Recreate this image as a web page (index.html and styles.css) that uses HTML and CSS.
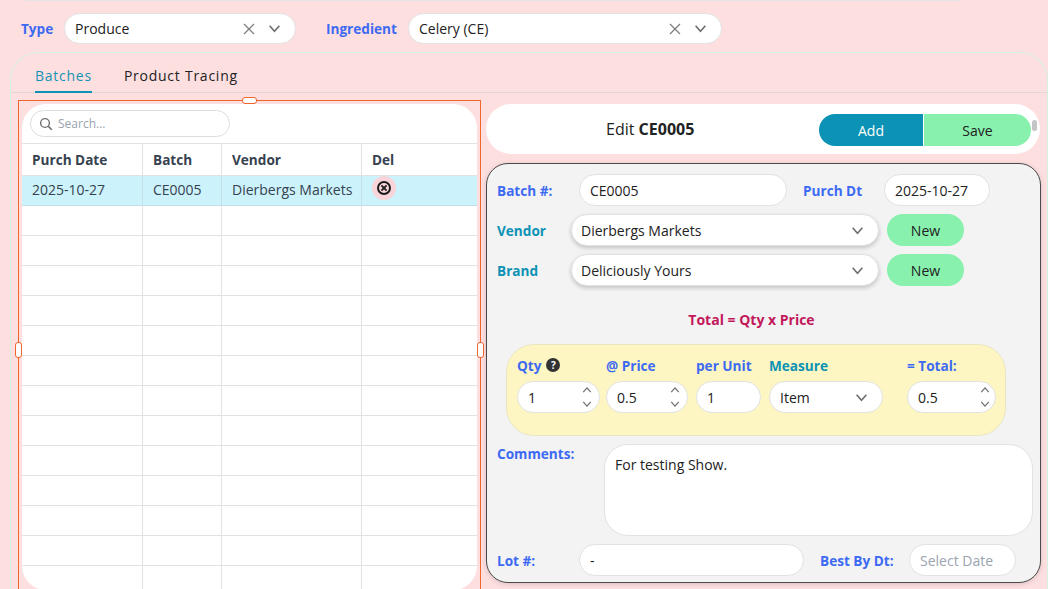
FILE: index.html
```html
<!DOCTYPE html>
<html lang="en">
<head>
  <meta charset="UTF-8">
  <meta name="viewport" content="width=device-width, initial-scale=1.0">
  <title>Batches</title>
  <link rel="stylesheet" href="styles.css">
</head>
<body>
  <svg class="icon-defs" width="0" height="0">
    <symbol id="chev-down" viewBox="0 0 12 12"><path d="M1.5 3.5 6 8.5l4.5-5" fill="none" stroke="currentColor" stroke-width="1.5"/></symbol>
    <symbol id="chev-up" viewBox="0 0 12 12"><path d="M1.5 8.5 6 3.5l4.5 5" fill="none" stroke="currentColor" stroke-width="1.5"/></symbol>
    <symbol id="cross" viewBox="0 0 12 12"><path d="M1 1l10 10M11 1 1 11" fill="none" stroke="currentColor" stroke-width="1.2"/></symbol>
  </svg>

  <div class="top-edge"></div>

  <div class="filters">
    <label class="lbl lbl-type">Type</label>
    <div class="pick pick-type">
      <span class="pick-text">Produce</span>
      <svg class="ic-x"><use href="#cross"/></svg>
      <svg class="ic-down"><use href="#chev-down"/></svg>
    </div>
    <label class="lbl lbl-ingredient">Ingredient</label>
    <div class="pick pick-ingredient">
      <span class="pick-text">Celery (CE)</span>
      <svg class="ic-x"><use href="#cross"/></svg>
      <svg class="ic-down"><use href="#chev-down"/></svg>
    </div>
  </div>

  <div class="main">
    <div class="tabs">
      <div class="tab active">Batches</div>
      <div class="tab">Product Tracing</div>
    </div>

    <div class="split">
      <div class="frame">
        <span class="handle handle-top"></span>
        <span class="handle handle-left"></span>
        <span class="handle handle-right"></span>
        <div class="list-panel">
          <div class="search-wrap">
            <div class="search">
              <svg class="ic-search" viewBox="0 0 14 14"><circle cx="6" cy="6" r="4.4" fill="none" stroke="currentColor" stroke-width="1.4"/><path d="M9.4 9.4 12.8 12.8" stroke="currentColor" stroke-width="1.6"/></svg>
              <span>Search...</span>
            </div>
          </div>
          <table class="grid">
            <colgroup>
              <col class="col-date"><col class="col-batch"><col class="col-vendor"><col>
            </colgroup>
            <thead>
              <tr><th>Purch Date</th><th>Batch</th><th>Vendor</th><th>Del</th></tr>
            </thead>
            <tbody>
              <tr class="selected">
                <td>2025-10-27</td><td>CE0005</td><td>Dierbergs Markets</td>
                <td>
                  <span class="del-btn">
                    <svg viewBox="0 0 16 16" width="16" height="16"><circle cx="8" cy="8" r="6" fill="none" stroke="#1c1c1c" stroke-width="2"/><path d="M5.4 5.4l5.2 5.2M10.6 5.4l-5.2 5.2" stroke="#1c1c1c" stroke-width="1.8"/></svg>
                  </span>
                </td>
              </tr>
              <tr><td></td><td></td><td></td><td></td></tr>
              <tr><td></td><td></td><td></td><td></td></tr>
              <tr><td></td><td></td><td></td><td></td></tr>
              <tr><td></td><td></td><td></td><td></td></tr>
              <tr><td></td><td></td><td></td><td></td></tr>
              <tr><td></td><td></td><td></td><td></td></tr>
              <tr><td></td><td></td><td></td><td></td></tr>
              <tr><td></td><td></td><td></td><td></td></tr>
              <tr><td></td><td></td><td></td><td></td></tr>
              <tr><td></td><td></td><td></td><td></td></tr>
              <tr><td></td><td></td><td></td><td></td></tr>
              <tr><td></td><td></td><td></td><td></td></tr>
              <tr><td></td><td></td><td></td><td></td></tr>
            </tbody>
          </table>
        </div>
      </div>

      <div class="detail">
        <div class="edit-head">
          <div class="edit-title">Edit <b>CE0005</b></div>
          <div class="edit-actions">
            <button class="btn-add">Add</button>
            <button class="btn-save">Save</button>
          </div>
          <span class="scroll-thumb"></span>
        </div>

        <div class="form">
          <div class="row">
            <label class="lbl w-81">Batch #:</label>
            <input class="field w-208" value="CE0005">
            <label class="lbl lbl-dt">Purch Dt</label>
            <input class="field w-106" value="2025-10-27">
          </div>
          <div class="row row-sel">
            <label class="lbl teal w-73">Vendor</label>
            <div class="pick pick-form"><span class="pick-text">Dierbergs Markets</span><svg class="ic-down"><use href="#chev-down"/></svg></div>
            <button class="btn-new">New</button>
          </div>
          <div class="row row-sel">
            <label class="lbl teal w-73">Brand</label>
            <div class="pick pick-form"><span class="pick-text">Deliciously Yours</span><svg class="ic-down"><use href="#chev-down"/></svg></div>
            <button class="btn-new">New</button>
          </div>

          <div class="formula">Total = Qty x Price</div>

          <div class="calc">
            <div class="calc-col c-qty">
              <label class="lbl">Qty <span class="help">?</span></label>
              <div class="num"><span class="num-val">1</span><span class="spin"><svg><use href="#chev-up"/></svg><svg><use href="#chev-down"/></svg></span></div>
            </div>
            <div class="calc-col c-price">
              <label class="lbl">@ Price</label>
              <div class="num"><span class="num-val">0.5</span><span class="spin"><svg><use href="#chev-up"/></svg><svg><use href="#chev-down"/></svg></span></div>
            </div>
            <div class="calc-col c-unit">
              <label class="lbl">per Unit</label>
              <div class="num"><span class="num-val">1</span></div>
            </div>
            <div class="calc-col c-measure">
              <label class="lbl teal">Measure</label>
              <div class="num"><span class="num-val">Item</span><svg class="ic-down"><use href="#chev-down"/></svg></div>
            </div>
            <div class="calc-col c-total">
              <label class="lbl">= Total:</label>
              <div class="num"><span class="num-val">0.5</span><span class="spin"><svg><use href="#chev-up"/></svg><svg><use href="#chev-down"/></svg></span></div>
            </div>
          </div>

          <div class="row row-comments">
            <label class="lbl w-106">Comments:</label>
            <textarea class="comments">For testing Show.</textarea>
          </div>

          <div class="row row-lot">
            <label class="lbl w-81">Lot #:</label>
            <input class="field w-225" value="-">
            <label class="lbl lbl-best">Best By Dt:</label>
            <input class="field w-107" placeholder="Select Date">
          </div>
        </div>
      </div>
    </div>
  </div>
</body>
</html>
```

FILE: styles.css
```css
* {
  box-sizing: border-box;
}
html, body {
  height: 589px;
  overflow: hidden;
}
body {
  margin: 0;
  background-color: #fddfe0;
  font-family: "Open Sans", sans-serif;
  font-size: 14px;
  color: #222;
}
.icon-defs {
  display: block;
  height: 0;
}
.top-edge {
  height: 1px;
  width: 935px;
  margin-left: 25px;
  background: #e4e4e4;
}
.lbl {
  font-weight: 700;
  font-size: 13.6px;
  color: #3d6af2;
  white-space: nowrap;
}
.teal {
  color: #0b92b5;
}

/* top filters */
.filters {
  display: flex;
  align-items: center;
  height: 31px;
  margin-top: 12px;
  padding-left: 21px;
}
.lbl-type {
  width: 43px;
}
.lbl-ingredient {
  width: 82px;
  margin-left: 30px;
}
.pick {
  display: flex;
  align-items: center;
  height: 32px;
  background: #fff;
  border: 1px solid #e2e2e2;
  border-radius: 16px;
  padding: 0 14px 0 10px;
}
.filters .pick {
  height: 31px;
}
.pick-text {
  flex: 1;
  white-space: nowrap;
}
.pick-type {
  width: 232px;
}
.pick-ingredient {
  width: 314px;
}
.ic-x {
  width: 12px;
  height: 12px;
  color: #7c7c7c;
  margin-right: 13px;
}
.ic-down {
  width: 13px;
  height: 13px;
  color: #6e6e6e;
}

/* tabbed card */
.main {
  margin: 8px 0 0 10px;
  height: 560px;
  border: 1px solid #d5efe0;
  border-bottom: 0;
  border-radius: 28px 28px 0 0;
}
.tabs {
  display: flex;
  gap: 32px;
  height: 40px;
  padding: 12px 0 0 24px;
  border-bottom: 1px solid #dcd8d8;
}
.tab {
  height: 28px;
  font-size: 14px;
  letter-spacing: 0.75px;
  line-height: 21px;
  color: #222;
}
.tab.active {
  color: #1494b4;
  border-bottom: 2px solid #0b92b5;
}
.split {
  display: flex;
  align-items: flex-start;
  padding: 7px 0 0 7px;
}

/* left list */
.frame {
  position: relative;
  width: 463px;
  height: 500px;
  flex: none;
  border: 1px solid #f0662a;
  padding: 3px;
}
.handle {
  position: absolute;
  background: #fff;
  border: 1px solid #f0662a;
  border-radius: 3px;
}
.handle-top {
  top: -4px;
  left: 223px;
  width: 15px;
  height: 7px;
}
.handle-left {
  top: 241px;
  left: -4px;
  width: 7px;
  height: 16px;
}
.handle-right {
  top: 241px;
  right: -4px;
  width: 7px;
  height: 16px;
}
.list-panel {
  height: 486px;
  background: #fff;
  border-radius: 24px;
  overflow: hidden;
}
.search-wrap {
  height: 39px;
  padding: 6px 0 0 8px;
}
.search {
  display: flex;
  align-items: center;
  gap: 5px;
  width: 200px;
  height: 27px;
  padding-left: 8px;
  border: 1px solid #dcdcdc;
  border-radius: 14px;
  font-size: 12px;
  color: #9aa3af;
}
.ic-search {
  width: 14px;
  height: 14px;
  color: #6f6f6f;
}
.grid {
  width: 455px;
  border-collapse: collapse;
  table-layout: fixed;
}
.col-date {
  width: 120.5px;
}
.col-batch {
  width: 79px;
}
.col-vendor {
  width: 140px;
}
.grid th, .grid td {
  height: 30px;
  padding: 0 10px;
  border: 1px solid #e2e2e2;
  border-left: 0;
  text-align: left;
  white-space: nowrap;
}
.grid th:last-child, .grid td:last-child {
  border-right: 0;
}
.grid th {
  height: 32px;
  font-weight: 700;
  font-size: 13.6px;
  color: #36424f;
}
.grid td {
  color: #36424f;
}
.grid .selected td {
  background: #ccf2fb;
  border-color: #c5dfe6;
  vertical-align: top;
  padding-top: 4px;
}
.del-btn {
  display: flex;
  align-items: center;
  justify-content: center;
  width: 24px;
  height: 24px;
  margin-top: -4px;
  border-radius: 50%;
  background: #f7d5d8;
}

/* right side */
.detail {
  width: 555px;
  margin-left: 5px;
  padding-top: 4px;
  flex: none;
}
.edit-head {
  position: relative;
  display: flex;
  align-items: center;
  width: 554px;
  height: 50px;
  background: #fff;
  border-radius: 25px;
  padding-right: 9px;
}
.edit-title {
  flex: 1;
  padding-left: 120px;
  font-size: 16px;
  white-space: nowrap;
}
.edit-actions {
  display: flex;
  gap: 1px;
  margin-top: 2px;
}
.edit-actions button {
  height: 32px;
  border: 0;
  font-family: inherit;
  font-size: 14px;
}
.btn-add {
  width: 104px;
  background: #0b92b5;
  color: #fff;
  border-radius: 16px 0 0 16px;
}
.btn-save {
  width: 107px;
  background: #88f1ad;
  color: #222;
  border-radius: 0 16px 16px 0;
}
.scroll-thumb {
  position: absolute;
  top: 16px;
  right: 3px;
  width: 5px;
  height: 11px;
  border-radius: 3px;
  background: #c4c4c4;
}
.form {
  width: 555px;
  height: 420px;
  margin-top: 9px;
  padding: 10px 0 0 10px;
  background: #f3f3f3;
  border: 1px solid #4a4a4a;
  border-radius: 22px;
  box-shadow: 0 1px 5px rgba(0, 0, 0, 0.15);
}
.row {
  display: flex;
  align-items: center;
  height: 32px;
}
.row-sel {
  margin-top: 8px;
}
.w-81 {
  width: 82px;
  flex: none;
}
.w-73 {
  width: 74px;
  flex: none;
}
.w-106 {
  width: 107px;
  flex: none;
}
.field {
  height: 32px;
  background: #fff;
  border: 1px solid #e2e2e2;
  border-radius: 16px;
  padding: 0 10px;
  font-family: inherit;
  font-size: 14px;
  color: #222;
}
.field::placeholder {
  color: #9aa3af;
  opacity: 1;
}
.w-208 {
  width: 208px;
}
.w-225 {
  width: 225px;
}
.w-107 {
  width: 107px;
}
.field.w-106 {
  width: 106px;
}
.lbl-dt {
  width: 81px;
  margin-left: 16px;
}
.lbl-best {
  width: 89px;
  margin-left: 16px;
}
.pick-form {
  width: 308px;
  padding: 0 14px 0 9px;
  box-shadow: 0 2px 4px rgba(0, 0, 0, 0.2);
}
.btn-new {
  width: 77px;
  height: 32px;
  margin-left: 8px;
  border: 0;
  border-radius: 16px;
  background: #88f1ad;
  font-family: inherit;
  font-size: 14px;
  color: #222;
}
.formula {
  width: 509px;
  margin-top: 24px;
  height: 20px;
  line-height: 20px;
  text-align: center;
  font-weight: 700;
  font-size: 14px;
  color: #c2185b;
}
.calc {
  display: flex;
  width: 500px;
  height: 92px;
  margin: 14px 0 0 9px;
  padding: 9px 0 0 10px;
  background: #fdf6c2;
  border: 1px solid #e9e6c4;
  border-radius: 28px;
}
.calc-col .lbl {
  display: flex;
  align-items: center;
  gap: 5px;
  height: 22px;
  margin-bottom: 5px;
}
.help {
  display: inline-flex;
  align-items: center;
  justify-content: center;
  width: 14px;
  height: 14px;
  border-radius: 50%;
  background: #333;
  color: #fff;
  font-size: 10px;
}
.num {
  display: flex;
  align-items: center;
  height: 32px;
  background: #fff;
  border: 1px solid #e2e2e2;
  border-radius: 16px;
  padding: 0 10px;
}
.num-val {
  flex: 1;
}
.spin {
  display: flex;
  flex-direction: column;
  gap: 4px;
  margin-right: -3px;
  color: #6e6e6e;
}
.spin svg {
  display: block;
  width: 10px;
  height: 10px;
}
.c-qty {
  width: 83px;
}
.c-price {
  width: 82px;
  margin-left: 6px;
}
.c-unit {
  width: 65px;
  margin-left: 8px;
}
.c-measure {
  width: 114px;
  margin-left: 8px;
}
.c-measure .num {
  padding-right: 14px;
}
.c-total {
  width: 89px;
  margin-left: 24px;
}
.c-total .spin {
  margin-right: -5px;
}
.row-comments {
  align-items: flex-start;
  height: 92px;
  margin-top: 8px;
}
.comments {
  width: 429px;
  height: 92px;
  flex: none;
  padding: 10px;
  background: #fff;
  border: 1px solid #e2e2e2;
  border-radius: 24px;
  font-family: inherit;
  font-size: 14px;
  color: #222;
  resize: none;
}
.row-lot {
  margin-top: 8px;
}
```
